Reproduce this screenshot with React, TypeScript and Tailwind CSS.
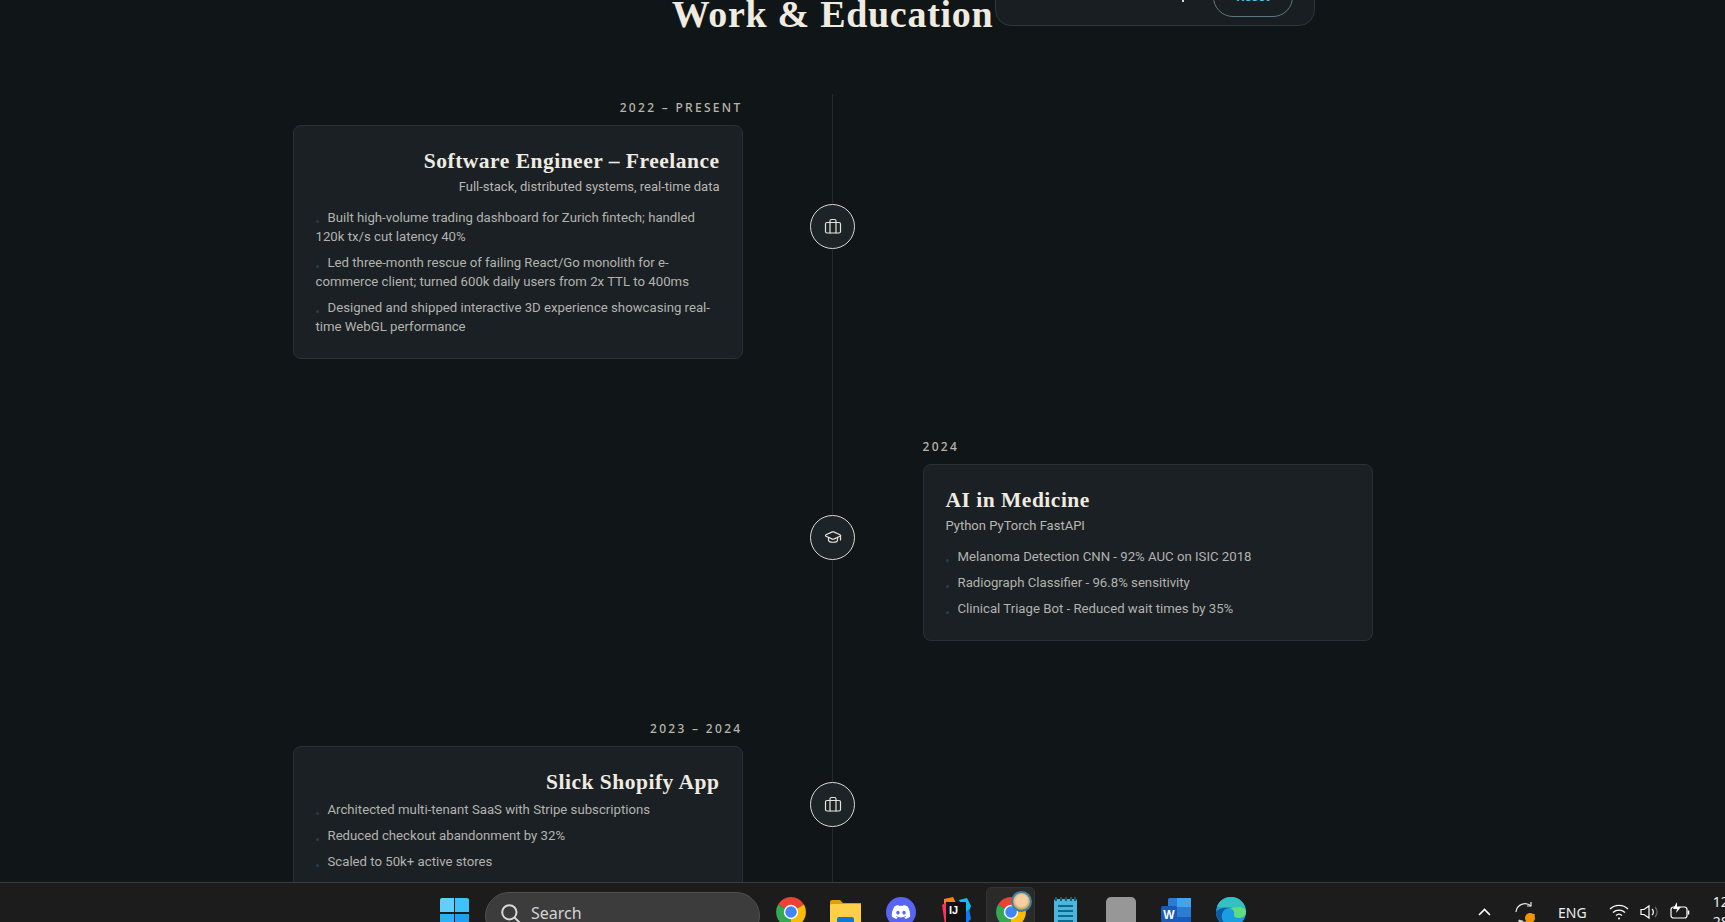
import React from "react";
import { Briefcase, GraduationCap } from "lucide-react";
import { FaDiscord } from "react-icons/fa";

interface Entry {
    date: string;
    title: string;
    subtitle?: string;
    bullets: string[];
    side: "left" | "right";
    icon: "work" | "school";
}

const entries: Entry[] = [
    {
        date: "2022 – PRESENT",
        title: "Software Engineer – Freelance",
        subtitle: "Full-stack, distributed systems, real-time data",
        bullets: [
            "Built high-volume trading dashboard for Zurich fintech; handled 120k tx/s cut latency 40%",
            "Led three-month rescue of failing React/Go monolith for e-commerce client; turned 600k daily users from 2x TTL to 400ms",
            "Designed and shipped interactive 3D experience showcasing real-time WebGL performance",
        ],
        side: "left",
        icon: "work",
    },
    {
        date: "2024",
        title: "AI in Medicine",
        subtitle: "Python PyTorch FastAPI",
        bullets: [
            "Melanoma Detection CNN - 92% AUC on ISIC 2018",
            "Radiograph Classifier - 96.8% sensitivity",
            "Clinical Triage Bot - Reduced wait times by 35%",
        ],
        side: "right",
        icon: "school",
    },
    {
        date: "2023 – 2024",
        title: "Slick Shopify App",
        bullets: [
            "Architected multi-tenant SaaS with Stripe subscriptions",
            "Reduced checkout abandonment by 32%",
            "Scaled to 50k+ active stores",
        ],
        side: "left",
        icon: "work",
    },
];

const Card = ({ entry }: { entry: Entry }) => {
    const isLeft = entry.side === "left";
    return (
        <div>
            <div
                className={`h-[31px] pt-[5px] text-[12px] leading-[18px] font-medium tracking-[2.3px] text-[#b9b5aa] font-['Noto_Sans',sans-serif] ${
                    isLeft ? "text-right" : "text-left"
                }`}
            >
                {entry.date}
            </div>
            <div className="rounded-lg border border-[#2a3136] bg-[#1a2024] p-[22px]">
                <h3
                    className={`text-[21.5px] leading-[27px] font-bold tracking-[0.5px] text-[#f0ebe1] font-['Liberation_Serif',serif] ${
                        isLeft ? "text-right" : "text-left"
                    }`}
                >
                    {entry.title}
                </h3>
                {entry.subtitle && (
                    <p
                        className={`mt-[2px] text-[13px] leading-[20px] text-[#b9b7b0] ${
                            isLeft ? "text-right" : "text-left"
                        }`}
                    >
                        {entry.subtitle}
                    </p>
                )}
                <ul className={`flex flex-col gap-[7px] ${entry.subtitle ? "mt-[11px]" : "mt-[4px]"}`}>
                    {entry.bullets.map((b) => (
                        <li key={b} className="text-[13.2px] leading-[19px] text-[#b3b3ad]">
                            <span className="mr-[9px] inline-block h-[3px] w-[3px] rounded-full bg-[#24404f] align-[-1px]" />
                            {b}
                        </li>
                    ))}
                </ul>
            </div>
        </div>
    );
};

const Chrome = ({ size = 30 }: { size?: number }) => (
    <svg width={size} height={size} viewBox="2 2 44 44">
        <path d="M24 24L5 13A22 22 0 0 1 43 13Z" fill="#ea4335" />
        <path d="M24 24L43 13A22 22 0 0 1 24 46Z" fill="#fbbc04" />
        <path d="M24 24L24 46A22 22 0 0 1 5 13Z" fill="#34a853" />
        <circle cx="24" cy="24" r="10.5" fill="#fff" />
        <circle cx="24" cy="24" r="8.5" fill="#4285f4" />
    </svg>
);

const Slot = ({ children }: { children: React.ReactNode }) => (
    <div className="relative flex w-[55px] shrink-0 justify-center">{children}</div>
);

const Taskbar = () => (
    <footer className="flex h-[40px] shrink-0 items-start overflow-hidden border-t border-[#3b3d3e] bg-[#1c1c1c] font-['Noto_Sans',sans-serif]">
        <div className="ml-[440px] mt-[15px] grid w-[29px] shrink-0 grid-cols-2 gap-[1.5px]">
            <div className="h-[14px] rounded-tl-[2px] bg-[#5fd0fb]" />
            <div className="h-[14px] rounded-tr-[2px] bg-[#3cc4fa]" />
            <div className="h-[14px] bg-[#2db0f6]" />
            <div className="h-[14px] bg-[#18a2f0]" />
        </div>
        <div className="ml-[16px] mt-[9px] flex h-[48px] w-[275px] shrink-0 items-start rounded-[24px] border border-[#505050] bg-[#3c3c3c] pl-[14px] pt-[8px]">
            <svg width="22" height="22" viewBox="0 0 20 20" fill="none" stroke="#d8d8d8" strokeWidth="1.8" className="mt-[2px]">
                <circle cx="8.5" cy="8.5" r="6.5" />
                <path d="M13.3 13.3L18.5 18.5" strokeLinecap="round" />
            </svg>
            <span className="ml-[9px] text-[16px] leading-[24px] text-[#d4d4d4]">Search</span>
        </div>
        <div className="ml-[3px] flex shrink-0 items-start pt-[14px]">
            <Slot>
                <Chrome />
            </Slot>
            <Slot>
                <svg width="31" height="30" viewBox="0 0 31 30" className="mt-[2px]">
                    <path d="M0 3a2 2 0 0 1 2-2h8l3 3h18v10H0z" fill="#d99f0c" />
                    <rect y="5" width="31" height="25" rx="1.5" fill="#ffcf49" />
                    <rect x="7" y="18" width="17" height="12" rx="2" fill="#0f78d4" />
                </svg>
            </Slot>
            <Slot>
                <div className="flex h-[30px] w-[30px] items-center justify-center rounded-full bg-[#5865f2]">
                    <FaDiscord size={20} color="#ffffff" />
                </div>
            </Slot>
            <Slot>
                <svg width="30" height="30" viewBox="0 0 30 30">
                    <path d="M3 2l9-2 3 6-12 14z" fill="#fc801d" />
                    <path d="M1 8l6-4 6 24H4z" fill="#fe315d" />
                    <path d="M18 3l8-2 4 8-4 10z" fill="#07c3f2" />
                    <path d="M20 20l8-8 2 10-8 8z" fill="#087cfa" />
                    <rect x="5" y="5" width="20" height="25" fill="#111111" />
                    <rect x="8" y="26" width="8" height="1.5" fill="#ffffff" />
                    <text x="8" y="17" fontSize="11" fontWeight="700" fill="#ffffff" fontFamily="Liberation Sans, sans-serif">IJ</text>
                </svg>
            </Slot>
            <Slot>
                <div className="absolute -top-[10px] left-[3px] h-[60px] w-[49px] rounded-[5px] border border-[#333333] bg-[#2a2a2a]" />
                <div className="relative">
                    <Chrome />
                    <div className="absolute -top-[6px] left-[15px] h-[21px] w-[21px] rounded-full border-2 border-[#3f7fa0] bg-[radial-gradient(circle_at_50%_45%,#f3cfa8_0_45%,#b9a24e_70%)]" />
                </div>
            </Slot>
            <Slot>
                <svg width="23" height="30" viewBox="0 0 23 30">
                    <rect y="2" width="23" height="28" rx="1.5" fill="#4db5da" />
                    <path d="M2 0v4M7 0v4M12 0v4M17 0v4M21 0v4" stroke="#0b5f80" strokeWidth="2" />
                    <path d="M4 9h15M4 14h15M4 19h15M4 24h15" stroke="#0b6b8f" strokeWidth="2" />
                </svg>
            </Slot>
            <Slot>
                <div className="h-[30px] w-[30px] rounded-[5px] bg-[#979797]" />
            </Slot>
            <Slot>
                <svg width="30" height="30" viewBox="0 0 30 30">
                    <rect x="7" y="1" width="23" height="29" rx="1.5" fill="#2b7cd3" />
                    <rect x="16" y="1" width="14" height="9" fill="#41a5ee" />
                    <rect x="7" y="10" width="23" height="10" fill="#2b7cd3" />
                    <rect x="7" y="20" width="23" height="10" fill="#185abd" />
                    <rect y="9" width="16" height="16" rx="1.5" fill="#1a5ab8" />
                    <text x="8" y="21.5" textAnchor="middle" fontSize="12" fontWeight="700" fill="#ffffff" fontFamily="Liberation Sans, sans-serif">W</text>
                </svg>
            </Slot>
            <Slot>
                <svg width="30" height="30" viewBox="0 0 30 30">
                    <circle cx="15" cy="15" r="15" fill="#1b9de2" />
                    <path d="M1 9c3-6 8-9 14-9 8 0 15 6 15 15 0 4-3 6-7 6-3 0-5-1-5-3 2-2 1-8-5-8-5 0-10 1-12-1z" fill="#35c1c1" />
                    <path d="M30 15c0 3-3 6-7 6-3 0-5-1-5-3 1-2 0-6-4-6 5-3 16-3 16 3z" fill="#5fdc7f" />
                    <path d="M13 11c-5 0-8 5-7 11 1 3 4 6 9 8-6 0-15-6-15-15 2-3 8-5 13-4z" fill="#0c59a4" />
                </svg>
            </Slot>
        </div>
        <div className="ml-[220px] flex shrink-0 items-start text-white">
            <svg width="13" height="8" viewBox="0 0 13 8" fill="none" stroke="#ffffff" strokeWidth="1.6" className="mt-[25px]">
                <path d="M1 7l5.5-5.5L12 7" />
            </svg>
            <div className="relative ml-[24px] mt-[19px] h-[26px] w-[20px]">
                <svg width="20" height="26" viewBox="0 0 20 26" fill="none" stroke="#e8e8e8" strokeWidth="1.2">
                    <path d="M1 10a9 9 0 0 1 15-6" />
                    <path d="M16 0v4h-4" />
                    <path d="M19 12a9 9 0 0 1-15 6" />
                    <path d="M4 24v-5h4" />
                </svg>
                <div className="absolute left-[10px] top-[11px] h-[10px] w-[10px] rounded-full bg-[#f59300]" />
            </div>
            <span className="ml-[23px] mt-[18px] text-[14px] leading-[24px] text-[#ededed]">ENG</span>
            <svg width="20" height="16" viewBox="0 0 20 16" fill="none" stroke="#ffffff" strokeWidth="1.3" className="ml-[22px] mt-[21px]">
                <path d="M1 5a13 13 0 0 1 18 0M4 8.5a9 9 0 0 1 12 0M7 11.5a4.5 4.5 0 0 1 6 0" />
                <circle cx="10" cy="14.5" r="1" fill="#ffffff" stroke="none" />
            </svg>
            <svg width="18" height="16" viewBox="0 0 18 16" fill="none" stroke="#ffffff" strokeWidth="1.2" className="ml-[11px] mt-[21px]">
                <path d="M1 5.5h3L9 2v12L4 10.5H1z" />
                <path d="M12 5a4 4 0 0 1 0 6" />
                <path d="M15 3a7 7 0 0 1 0 10" stroke="#6e6e6e" />
            </svg>
            <svg width="20" height="18" viewBox="0 0 20 18" fill="none" stroke="#ffffff" strokeWidth="1.2" className="ml-[12px] mt-[19px]">
                <rect x="1" y="5" width="16" height="11" rx="2.5" />
                <path d="M18.5 8.5v4" strokeWidth="1.5" />
                <path d="M7 0L3 7h4l-1 4 5-6H7z" fill="#ffffff" stroke="none" />
            </svg>
            <div className="ml-[23px] text-[14px] leading-[20px] whitespace-nowrap text-[#f0f0f0]">
                <div className="mt-[9px]">12:41</div>
                <div>28/11</div>
            </div>
        </div>
    </footer>
);

const App = () => {
    return (
        <div className="flex h-[922px] w-full flex-col overflow-hidden bg-[#101518] font-['Roboto',sans-serif]">
            <main className="relative min-h-0 flex-1 overflow-hidden">
                {/* floating controls panel, scrolled mostly off the top */}
                <div className="absolute left-[995px] top-[-44px] z-10 flex h-[70px] w-[320px] items-end justify-end rounded-2xl border border-[#2f3639] bg-[#181e21] pb-[8px] pr-[21px]">
                    <span className="mb-[15px] mr-[29px] h-[2px] w-[2px] bg-[#d8d8d8]" />
                    <button className="flex h-[40px] w-[80px] items-end justify-center rounded-[20px] border border-[#5d7a80] text-[13px] leading-[20px] font-semibold text-[#4cc9e8]">
                        <span className="mb-[9px]">Reset</span>
                    </button>
                </div>
                <div className="w-[1665px]">
                    <h2 className="h-[94px] text-center text-[38px] leading-[28px] font-bold tracking-[0.7px] text-[#f0ebe1] font-['Liberation_Serif',serif]">
                        Work &amp; Education
                    </h2>
                    <div className="relative mx-auto w-[1080px]">
                        <div className="absolute bottom-0 left-[539.5px] top-0 w-px bg-[#232a2e]" />
                        <div className="flex flex-col gap-[74px]">
                            {entries.map((entry) => (
                                <div key={entry.title} className="relative grid grid-cols-[450px_180px_450px] items-center">
                                    <div>{entry.side === "left" && <Card entry={entry} />}</div>
                                    <div className="flex justify-center">
                                        <div className="flex h-[45px] w-[45px] items-center justify-center rounded-full border-[1.5px] border-[#dcd9d0] bg-[#1d2428] text-[#e6e3da]">
                                            {entry.icon === "work" ? (
                                                <Briefcase size={18} strokeWidth={1.6} />
                                            ) : (
                                                <GraduationCap size={18} strokeWidth={1.6} />
                                            )}
                                        </div>
                                    </div>
                                    <div>{entry.side === "right" && <Card entry={entry} />}</div>
                                </div>
                            ))}
                        </div>
                    </div>
                </div>
            </main>
            <Taskbar />
        </div>
    );
};

export default App;
